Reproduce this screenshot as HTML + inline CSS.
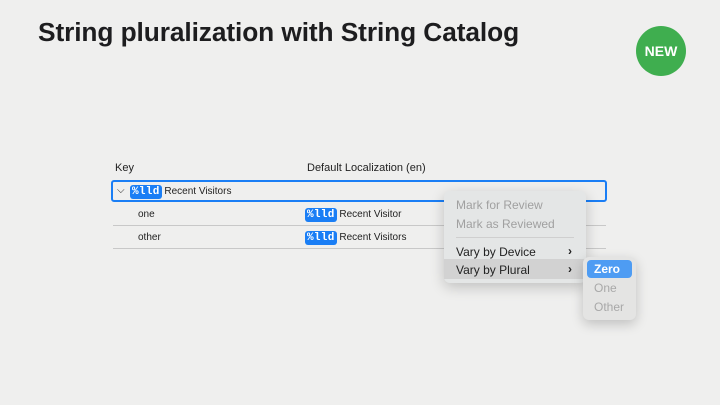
<!DOCTYPE html>
<html><head><style>
body{margin:0;width:720px;height:405px;background:#efefee;font-family:"Liberation Sans",sans-serif;position:relative;overflow:hidden}
.a{position:absolute}
h1{position:absolute;left:38px;top:17px;margin:0;font-size:26.3px;font-weight:bold;color:#1d1d1f;letter-spacing:-0.1px}
.new{left:636px;top:26px;width:50px;height:50px;border-radius:50%;background:#3fae4f;color:#fff;font-weight:bold;font-size:14px;text-align:center;line-height:50px}
.t{font-size:10px;color:#222}
.tag{background:#1a7ef5;color:#fff;font-family:"Liberation Mono",monospace;font-weight:bold;font-size:11px;border-radius:3px;padding:1px 2px;letter-spacing:0.3px}
.line{height:1px;background:#c8c8c8}
.menu{left:444px;top:191px;width:142px;height:92px;background:#e4e6e6;border-radius:6px;box-shadow:0 4px 14px rgba(0,0,0,.2)}
.mi{position:absolute;left:12px;font-size:12px}
</style></head><body>
<h1>String pluralization with String Catalog</h1>
<div class="a new">NEW</div>
<div class="a t" style="left:115px;top:162px;font-size:11px">Key</div>
<div class="a t" style="left:307px;top:162px;font-size:11px">Default Localization (en)</div>
<div class="a" style="left:111px;top:180px;width:496px;height:22px;border:2px solid #1a7ef5;border-radius:3px;box-sizing:border-box"></div>
<div class="a t" style="left:117px;top:185px">⌵</div>
<div class="a t" style="left:130px;top:186px"><span class="tag">%lld</span> Recent Visitors</div>
<div class="a t" style="left:138px;top:209px">one</div>
<div class="a t" style="left:305px;top:209px"><span class="tag">%lld</span> Recent Visitor</div>
<div class="a line" style="left:113px;top:225px;width:493px"></div>
<div class="a t" style="left:138px;top:232px">other</div>
<div class="a t" style="left:305px;top:232px"><span class="tag">%lld</span> Recent Visitors</div>
<div class="a line" style="left:113px;top:248px;width:493px"></div>
<div class="a menu">
<div class="mi" style="top:7px;color:#a0a0a0">Mark for Review</div>
<div class="mi" style="top:26px;color:#a0a0a0">Mark as Reviewed</div>
<div class="a" style="left:12px;top:46px;width:118px;height:1px;background:#cfcfcf"></div>
<div class="mi" style="top:54px;color:#222">Vary by Device</div>
<div class="mi" style="left:124px;top:53px;color:#222;font-weight:bold">›</div>
<div class="a" style="left:0;top:68px;width:142px;height:20px;background:#d2d2d2"></div>
<div class="mi" style="top:72px;color:#222">Vary by Plural</div>
<div class="mi" style="left:124px;top:71px;color:#222;font-weight:bold">›</div>
</div>
<div class="a" style="left:583px;top:257px;width:53px;height:63px;background:#e4e4e3;border-radius:6px;box-shadow:0 4px 12px rgba(0,0,0,.2)">
<div class="a" style="left:4px;top:3px;width:45px;height:18px;background:#4e9cf3;border-radius:4px"></div>
<div class="a" style="left:11px;top:5px;font-size:12px;color:#fff;font-weight:bold">Zero</div>
<div class="a" style="left:11px;top:24px;font-size:12px;color:#a8a8a8">One</div>
<div class="a" style="left:11px;top:43px;font-size:12px;color:#a8a8a8">Other</div>
</div>
</body></html>
